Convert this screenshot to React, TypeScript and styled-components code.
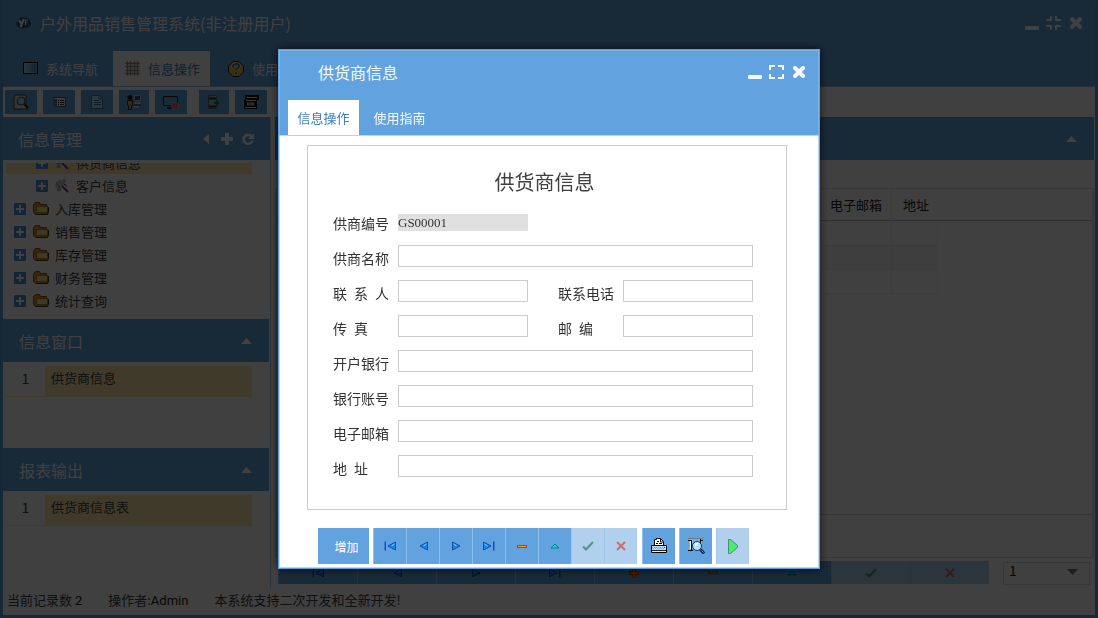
import React from "react";
import styled, { createGlobalStyle, css } from "styled-components";

const blue = "#62a2de";
const sand = "#ffe6ac";
const sans = `"Noto Sans CJK SC", sans-serif`;

const Global = createGlobalStyle`
  *, *::before, *::after { box-sizing: border-box; }
  body { margin: 0; background: #fff; font: 13px/20px ${sans}; color: #404040; }
  button, input, select { font: inherit; color: inherit; margin: 0; padding: 0; border: 0; border-radius: 0; }
  h1, h2, h3, ul, ol { margin: 0; padding: 0; font-weight: 400; list-style: none; }
  svg { display: block; flex: none; }
`;

/* ---------- application frame ---------- */
const Frame = styled.div`
  min-height: 100vh;
  display: flex;
  flex-direction: column;
  border: 3px solid #5a9ad8;
  border-top-color: ${blue};
  background: #fff;
`;
const AppHeader = styled.header`
  background: ${blue};
  color: #fff;
  border-bottom: 1px solid #8fbfe8;
`;
const TitleBar = styled.div`
  display: flex;
  align-items: center;
  gap: 8px;
  height: 48px;
  padding: 0 12px 8px 13px;
`;
const AppTitle = styled.h1`
  flex: 1;
  font-size: 16px;
  line-height: 24px;
`;
const WindowControls = styled.div`
  display: flex;
  gap: 7px;
`;
const IconButton = styled.button`
  display: grid;
  place-items: center;
  width: 15px;
  height: 16px;
  background: none;
  color: inherit;
`;
const AppTabs = styled.nav`
  display: flex;
  height: 35px;
  padding-left: 10px;
`;
const AppTab = styled.button<{ $active?: boolean }>`
  display: flex;
  align-items: center;
  gap: 8px;
  padding: 0 9px 0 ${(p) => (p.$active ? 12 : 10)}px;
  width: ${(p) => (p.$active ? "97px" : "100px")};
  white-space: nowrap;
  background: ${(p) => (p.$active ? "#fff" : "transparent")};
  color: ${(p) => (p.$active ? "#3f7fbb" : "#fff")};
  &:last-child { margin-left: 8px; }
`;
const Toolbar = styled.div`
  display: flex;
  gap: 6px;
  height: 30px;
  padding: 3px 2px;
`;
const ToolButton = styled.button<{ $narrow?: boolean; $group?: boolean }>`
  display: grid;
  place-items: center;
  width: ${(p) => (p.$narrow ? 30 : 32)}px;
  height: 24px;
  margin-left: ${(p) => (p.$group ? 6 : 0)}px;
  background: ${blue};
`;
const Workspace = styled.div`
  flex: 1;
  display: grid;
  grid-template-columns: 268px minmax(0, 1fr);
  gap: 4px;
  padding-right: 1px;
`;
const Sidebar = styled.aside`
  display: flex;
  flex-direction: column;
  border-right: 1px solid #a9cdef;
`;
const BarHeader = styled.header`
  display: flex;
  align-items: center;
  gap: 6px;
  height: 43px;
  padding: 0 15px 0 15px;
  background: ${blue};
  color: #fff;
`;
const BarTitle = styled.h2`
  flex: 1;
  font-size: 16px;
  line-height: 24px;
`;
const Tree = styled.ul`
  display: flex;
  flex-direction: column;
  justify-content: flex-end;
  height: 156px;
  margin-top: 3px;
  padding: 0 18px 7px 3px;
  overflow: hidden;
`;
const TreeRow = styled.li<{ $level: number; $selected?: boolean }>`
  display: flex;
  flex: none;
  align-items: center;
  height: 23px;
  padding-left: ${(p) => 8 + p.$level * 22}px;
  background: ${(p) => (p.$selected ? sand : "transparent")};
  svg + svg { margin: 0 6px 0 7px; }
`;
const Section = styled.section`
  height: 129px;
  padding-right: 1px;
  ${BarHeader} { padding-left: 16px; }
`;
const List = styled.ol`
  padding: 4px 17px 0 3px;
`;
const ListRow = styled.li`
  display: grid;
  grid-template-columns: 39px 1fr;
  height: 31px;
  background: ${sand};
  line-height: 24px;
  > span { padding-left: 6px; }
  > span:first-child { margin-bottom: 1px; padding: 0; text-align: center; background: #fff; font-size: 14px; }
`;

const Main = styled.main`
  display: flex;
  flex-direction: column;
`;
const GridArea = styled.div`
  flex: 1;
  display: flex;
  flex-direction: column;
  margin-top: 28px;
  border: solid #d4dee8;
  border-width: 1px 2px 1px 2px;
`;
const GridHead = styled.div`
  flex: 1;
  border-bottom: 1px solid #d8d8d8;
  background: linear-gradient(#fff 31px, #b8b8b8 31px, #b8b8b8 32px, #fff 32px);
`;
const Summary = styled.div`
  height: 42px;
`;
const Table = styled.table`
  width: 661px;
  table-layout: fixed;
  border-collapse: separate;
  border-spacing: 0;
  th { height: 33px; padding: 0 0 2px 11px; text-align: left; font-weight: 400; color: #222; white-space: nowrap; }
  td { height: 24px; border-bottom: 1px solid #f0f0f0; }
  th + th, td + td { border-right: 1px solid #eee; }
  th:last-child { border-right: 0; }
  tr:nth-child(2) td { background: #f7f7f7; }
`;
const Pager = styled.div`
  display: flex;
  gap: 14px;
  height: 30px;
  padding: 3px 4px 4px 3px;
`;
const Navigator = styled.div`
  flex: 1;
  display: flex;
`;
const PageSelect = styled.div`
  position: relative;
  width: 87px;
  select {
    width: 100%;
    height: 23px;
    padding: 0 5px 6px;
    appearance: none;
    background: #fff;
    border: 1px solid #d5dbe2;
    font-size: 14px;
    line-height: 14px;
    color: #222;
  }
  svg { position: absolute; right: 12px; top: 8px; color: #777; pointer-events: none; }
`;
const StatusBar = styled.footer`
  display: flex;
  gap: 26px;
  padding: 0 4px;
  height: 27px;
  line-height: 24px;
  b { font-weight: 400; font-family: Roboto, sans-serif; color: #181818; }
`;

/* ---------- dialog ---------- */
const Overlay = styled.div`
  position: fixed;
  inset: 0;
  display: grid;
  place-items: center;
  background: rgba(0, 0, 0, 0.75);
`;
const Dialog = styled.section`
  width: 542px;
  max-width: 100%;
  border: 1px solid #5a9fe2;
  background: #fff;
  box-shadow: inset 0 0 0 1px #b9d8f5, 0 0 8px rgba(0, 0, 0, 0.7);
`;
const DialogHeader = styled.header`
  background: ${blue};
  border: 1px solid #7db3e6;
  border-bottom-color: #b4d4f1;
  color: #f4f8fc;
`;
const DialogTitleBar = styled.div`
  display: flex;
  align-items: center;
  height: 49px;
  padding: 0 12px 7px 38px;
`;
const DialogTabs = styled.nav`
  display: flex;
  height: 35px;
  padding-left: 8px;
`;
const DialogTab = styled.button<{ $active?: boolean }>`
  width: ${(p) => (p.$active ? 71 : 81)}px;
  background: ${(p) => (p.$active ? "#fff" : "transparent")};
  color: ${(p) => (p.$active ? "#3f7fbb" : "#f4f8fc")};
`;
const DialogBody = styled.form`
  padding: 9px 32px 4px 28px;
`;
const Panel = styled.div`
  padding: 20px 33px 22px 25px;
  border: 1px solid #ccc;
`;
const FormTitle = styled.h3`
  margin-bottom: 9px;
  padding-left: 3px;
  font-size: 20px;
  line-height: 32px;
  text-align: center;
`;
const FormRow = styled.div`
  display: flex;
  gap: 30px;
  height: 35px;
  padding-top: 3px;
`;
const Field = styled.div<{ $half?: boolean }>`
  display: flex;
  align-items: flex-start;
  min-width: 0;
  flex: ${(p) => (p.$half ? "0 1 195px" : "1 1 0")};
  label { width: 65px; flex: none; font-size: 14px; line-height: 27px; color: #333; }
`;
const TextInput = styled.input`
  flex: 1;
  min-width: 0;
  height: 22px;
  padding: 0 4px;
  border: 1px solid #ccc;
  background: #fff;
  &:read-only {
    height: 17px;
    margin-top: 4px;
    padding: 0;
    border: 0;
    background: #e0e0e0;
    font: 13px/17px "Liberation Serif", serif;
    color: #333;
  }
`;
const Actions = styled.div`
  display: flex;
  gap: 4px;
  padding: 18px 0 0 11px;
`;
const ActionGroup = styled.div`
  display: flex;
  margin-right: 1px;
`;
const navTone = css<{ $off?: boolean }>`
  display: grid;
  place-items: center;
  background: ${(p) => (p.$off ? "#b0d0ee" : blue)};
  border-left: 1px solid ${(p) => (p.$off ? "#a0c6ea" : "#8fbfec")};
`;
const ActionButton = styled.button<{ $off?: boolean }>`
  ${navTone}
  width: 33px;
  height: 36px;
`;
const AddButton = styled.button`
  width: 51px;
  height: 36px;
  padding: 2px 0 0 6px;
  background: ${blue};
  color: #fff;
  font-size: 12px;
`;
const NavButton = styled.button<{ $off?: boolean }>`
  ${navTone}
  flex: 1;
`;

/* ---------- icons ---------- */
const Svg = ({ w = 16, h = 16, children }: { w?: number; h?: number; children: React.ReactNode }) => (
  <svg width={w} height={h} viewBox={`0 0 ${w} ${h}`} fill="currentColor" aria-hidden="true">{children}</svg>
);
const MinusCtl = () => <Svg w={14} h={14}><rect y="10" width="14" height="4" rx="1" /></Svg>;
const ExpandCtl = () => <Svg w={15} h={14}><path d="M0 0h6v2H2v3H0zM9 0h6v5h-2V2H9zM0 9h2v3h4v2H0zM13 9h2v5H9v-2h4z" /></Svg>;
const ShrinkCtl = () => <Svg w={15} h={14}><path d="M4 0h2v5H0V3h4zM9 0h2v3h4v2H9zM0 9h6v5H4v-3H0zM9 9h6v2h-4v3H9z" /></Svg>;
const CloseCtl = () => <Svg w={12} h={12}><path d="M2 2l8 8M10 2l-8 8" stroke="currentColor" strokeWidth="4" strokeLinecap="round" /></Svg>;
const CaretUp = () => <Svg w={11} h={6}><path d="M0 6L5.500 0 11 6z" /></Svg>;
const CaretDown = () => <Svg w={11} h={6}><path d="M0 0h11L5.500 6z" /></Svg>;
const CaretLeft = () => <Svg w={6} h={10}><path d="M6 0v10L0 5z" /></Svg>;
const PlusCtl = () => <Svg w={12} h={12}><path d="M4 0h4v4h4v4H8v4H4V8H0V4h4z" /></Svg>;
const Refresh = () => (
  <Svg w={12} h={12}>
    <path d="M9 3A4.500 4.500 0 1 0 10.400 7.500" fill="none" stroke="currentColor" strokeWidth="2.500" />
    <path d="M12 0v6H6z" />
  </Svg>
);
const Logo = () => (
  <Svg>
    <path d="M3 4C5 1 8 3 9 3c3-1 4 1 5 3 2 2 1 5-1 6-3 2-7 1-9 1-3-1-5-4-3-6z" fill="#1f5f94" />
    <path d="M3 5l2.500 4M8 4L4.500 12" stroke="#fff" strokeWidth="2" fill="none" />
    <path d="M9 5h3M9.500 5v5M9 7.500h2" stroke="#fff" fill="none" />
  </Svg>
);
const ScreenIcon = () => (
  <Svg w={15} h={13}>
    <defs><linearGradient id="scr"><stop stopColor="#a8dcf4" /><stop offset="1" stopColor="#3c80c0" /></linearGradient></defs>
    <rect x=".5" y=".5" width="14" height="11" fill="url(#scr)" stroke="#000" />
    <rect x="1.500" y="1.500" width="12" height="9" fill="none" stroke="#d8d8d8" strokeOpacity=".5" />
  </Svg>
);
const GridIcon = () => (
  <Svg w={15} h={15}>
    <path d="M1 1h13v13H1z" fill="#e0dcd8" />
    <path d="M2.500 0v15M5.500 0v15M9.500 0v15M12.500 0v15M0 2.500h15M0 5.500h15M0 9.500h15M0 12.500h15" stroke="#989490" />
  </Svg>
);
const HelpIcon = () => (
  <Svg>
    <path d="M5 .5h6L15.500 5v6L11 15.500H5L.5 11V5z" fill="#f2b43c" stroke="#201000" />
    <path d="M5 6c0-4 6-4 6-1 0 2-3 2-3 4M8 11v2" stroke="#fff" strokeWidth="3" fill="none" />
    <path d="M5 6c0-4 6-4 6-1 0 2-3 2-3 4M8 11v2" stroke="#3468b0" strokeWidth="2" fill="none" />
  </Svg>
);
const SearchDoc = () => (
  <Svg>
    <path d="M2 1h11v11l2 3H1V4z" fill="#d8d4c8" stroke="#444" />
    <circle cx="8" cy="7" r="4" fill="#9ce0f4" stroke="#34505c" />
    <path d="M11 10l4 4" stroke="#222" strokeWidth="2" />
  </Svg>
);
const FormIcon = () => (
  <Svg>
    <path d="M2.500 3.500h12v9h-12z" fill="#e8e8e8" stroke="#555" />
    <path d="M2 5h4v8H2z" fill="#4a80b0" />
    <path d="M7 6.500h1M9 6.500h4M7 8.500h1M9 8.500h4M7 10.500h1M9 10.500h4" stroke="#333" />
  </Svg>
);
const PageIcon = () => (
  <Svg>
    <path d="M2.500 1.500h8l3 3v10h-11z" fill="#b8e0f0" stroke="#507890" />
    <path d="M10 1v4h4M5 6.500h5M5 8.500h7M5 10.500h7" stroke="#407090" fill="none" />
  </Svg>
);
const PersonIcon = () => (
  <Svg>
    <circle cx="4" cy="3.500" r="2.500" fill="#222" />
    <path d="M1.500 6.500h5v5h-1v4h-3v-4h-1z" fill="#d8a860" stroke="#302010" />
    <path d="M8.500 1.500h6v5h-6z" fill="#2840b8" stroke="#c8c8c8" />
    <path d="M8 9.500h7M8 12.500h5" stroke="#ddd" strokeWidth="2" />
    <path d="M8 11h7" stroke="#222" />
  </Svg>
);
const MonitorIcon = () => (
  <Svg>
    <path d="M.5 2.500h14v9H.5z" fill="#68acd8" stroke="#222" />
    <path d="M4 14h5" stroke="#333" strokeWidth="2" />
    <circle cx="12" cy="12" r="3.500" fill="#c85898" stroke="#d8c040" />
    <circle cx="12" cy="12" r="1" fill="#60c8e8" />
  </Svg>
);
const ImportIcon = () => (
  <Svg>
    <path d="M2.500 1.500h8v13h-8z" fill="#88b8d4" stroke="#6a6a6a" />
    <path d="M3 4.500h7M3 12.500h7" stroke="#333" strokeWidth="2" />
    <path d="M8 9h5M11 6v6" stroke="#187828" strokeWidth="2" />
  </Svg>
);
const ExportIcon = () => (
  <Svg>
    <path d="M2 1h14v5h-2v9H1V6h1z" fill="#111" />
    <path d="M4 3.500h10M3 6.500h10M2 13.500h11" stroke="#ddd" />
    <path d="M4 10h7" stroke="#ddd" strokeWidth="3" />
    <path d="M5 10h5" stroke="#555" />
  </Svg>
);
const Expander = () => (
  <Svg w={12} h={12}><rect width="12" height="12" rx="1" fill="#4a90d2" /><path d="M6 2v8M2 6h8" stroke="#fff" strokeWidth="2" /></Svg>
);
const Folder = () => (
  <Svg w={16} h={16}>
    <path d="M.5 11.500v-8l2-2h4l1 2h6v2h1v7l-1 1h-11z" fill="#d69a28" stroke="#8a5410" />
    <path d="M3.500 5.500h11v6h-11z" fill="#f3e28a" stroke="#b07a20" />
    <path d="M3 13.500h11.500l1-2V6" fill="none" stroke="#402804" />
  </Svg>
);
const Wand = () => (
  <Svg w={15} h={16}>
    <path d="M1 5l4-3 1 2 3-3 2 2-4 4-5 5 2-4-3 1zM2 12l4-2-1 3z" fill="#c4c4c4" stroke="#777" strokeWidth=".5" />
    <path d="M7 8l6 6" stroke="#7a30b0" strokeWidth="2" />
    <path d="M9 6l3 2" stroke="#333" />
  </Svg>
);

const Right = ({ x = 0 }: { x?: number }) => (
  <g transform={`translate(${x} 0)`}>
    <path d="M.5 1l7.500 4-7.500 4z" fill="#1d84ee" stroke="#0b4fa8" />
    <path d="M1.500 3l3 2" stroke="#8cc8ff" />
  </g>
);
const NextIcon = () => <Svg w={9} h={10}><Right /></Svg>;
const PrevIcon = () => <Svg w={9} h={10}><g transform="translate(9 0) scale(-1 1)"><Right /></g></Svg>;
const LastIcon = () => <Svg w={12} h={10}><Right /><path d="M10 .5h1.500v9H10z" fill="#0b56b8" /></Svg>;
const FirstIcon = () => (
  <Svg w={12} h={10}><g transform="translate(12 0) scale(-1 1)"><Right /><path d="M10 .5h1.500v9H10z" fill="#0b56b8" /></g></Svg>
);
const AddIcon = () => (
  <Svg w={10} h={10}><path d="M3.500.5h3v3h3v3h-3v3h-3v-3h-3v-3h3z" fill="#f07818" stroke="#c82c08" /></Svg>
);
const RemoveIcon = () => <Svg w={10} h={3}><path d="M0 0h10v3H0z" fill="#c83808" /><path d="M1 1h8v1H1z" fill="#ff9a00" /></Svg>;
const EditIcon = () => <Svg w={10} h={6}><path d="M1 5l4-4 4 4z" fill="#20d0d0" stroke="#087c90" /></Svg>;
const CheckIcon = () => <Svg w={12} h={10}><path d="M1 5.500l3 3L11 1" fill="none" stroke="#4a9c78" strokeWidth="2" /></Svg>;
const CrossIcon = () => <Svg w={10} h={10}><path d="M1 1l8 8M9 1L1 9" stroke="#d06a70" strokeWidth="2" /></Svg>;
const PrintIcon = () => (
  <Svg w={16} h={16}>
    <path d="M3.500 7V1.500h2V.5h4l3 3V7" fill="#fff" stroke="#000" />
    <path d="M9.500 1v3H12M6 3.500h2M5 5.500h2M8 5.500h3" stroke="#000" fill="none" />
    <path d="M.5 7.500h15v7H.5z" fill="#b8d8fc" stroke="#000" />
    <path d="M1 13.500h14" stroke="#f4ecc8" />
    <path d="M1 12.500h14" stroke="#222" />
    <path d="M1 9.500h12" stroke="#6aa2e0" strokeDasharray="1 1" />
    <path d="M2 10.500h11" stroke="#6aa2e0" strokeDasharray="1 1" />
    <path d="M13 9.500h1" stroke="#e02020" />
  </Svg>
);
const PreviewIcon = () => (
  <Svg w={17} h={16}>
    <path d="M1 1h13v11H1z" fill="#6cb4ec" />
    <path d="M0 .5h15M3 11.500h4" stroke="#777" />
    <path d="M0 2.500h4M12 2.500h3M0 12.500h5M12.500 1v4M3.500 3v9" stroke="#111" />
    <path d="M2 3h1v8H2z" fill="#fff" />
    <circle cx="9" cy="8" r="4.500" fill="#aee4ff" stroke="#14344c" />
    <path d="M7 7l3-2" stroke="#fff" strokeWidth="2" />
    <path d="M12.500 11.500l3.500 4" stroke="#0a2c60" strokeWidth="3" />
    <path d="M13.500 12.500l2 2" stroke="#2fa8f0" strokeWidth="1" />
  </Svg>
);
const RunIcon = () => <Svg w={11} h={15}><path d="M.5 .5v14h2l7-6v-2l-7-6z" fill="#50e878" stroke="#4a9070" /></Svg>;

/* ---------- data ---------- */
const toolbarItems = [
  { name: "查询", Icon: SearchDoc },
  { name: "表单", Icon: FormIcon },
  { name: "文档", Icon: PageIcon },
  { name: "用户", Icon: PersonIcon, narrow: true },
  { name: "界面", Icon: MonitorIcon },
  { name: "导入", Icon: ImportIcon, narrow: true, group: true },
  { name: "导出", Icon: ExportIcon },
];
const tree = [
  { label: "供货商信息", level: 1, selected: true },
  { label: "客户信息", level: 1 },
  { label: "入库管理", level: 0 },
  { label: "销售管理", level: 0 },
  { label: "库存管理", level: 0 },
  { label: "财务管理", level: 0 },
  { label: "统计查询", level: 0 },
];
const moves = [
  { name: "首条", Icon: FirstIcon },
  { name: "上一条", Icon: PrevIcon },
  { name: "下一条", Icon: NextIcon },
  { name: "末条", Icon: LastIcon },
];
const edits = [
  { name: "删除", Icon: RemoveIcon },
  { name: "编辑", Icon: EditIcon },
  { name: "保存", Icon: CheckIcon, off: true },
  { name: "取消", Icon: CrossIcon, off: true },
];
const dialogNav: { name: string; Icon: React.FC; off?: boolean }[] = [...moves, ...edits];
const gridNav: { name: string; Icon: React.FC; off?: boolean }[] = [...moves, { name: "新增", Icon: AddIcon }, ...edits];

type FieldSpec = { id: string; label: string; value?: string; half?: boolean };
const rows: FieldSpec[][] = [
  [{ id: "code", label: "供商编号", value: "GS00001", half: true }],
  [{ id: "name", label: "供商名称" }],
  [{ id: "contact", label: "联\u2002系\u2002人" }, { id: "phone", label: "联系电话" }],
  [{ id: "fax", label: "传\u2002真" }, { id: "zip", label: "邮\u2002编" }],
  [{ id: "bank", label: "开户银行" }],
  [{ id: "account", label: "银行账号" }],
  [{ id: "email", label: "电子邮箱" }],
  [{ id: "address", label: "地\u2002址" }],
];

const SideSection = ({ title, item }: { title: string; item: string }) => (
  <Section>
    <BarHeader>
      <BarTitle>{title}</BarTitle>
      <IconButton type="button" aria-label="折叠"><CaretUp /></IconButton>
    </BarHeader>
    <List>
      <ListRow><span>1</span><span>{item}</span></ListRow>
    </List>
  </Section>
);

export default function App() {
  return (
    <>
      <Global />
      <Frame>
        <AppHeader>
          <TitleBar>
            <Logo />
            <AppTitle>户外用品销售管理系统(非注册用户)</AppTitle>
            <WindowControls>
              <IconButton aria-label="最小化"><MinusCtl /></IconButton>
              <IconButton aria-label="还原"><ShrinkCtl /></IconButton>
              <IconButton aria-label="关闭"><CloseCtl /></IconButton>
            </WindowControls>
          </TitleBar>
          <AppTabs>
            <AppTab><ScreenIcon />系统导航</AppTab>
            <AppTab $active><GridIcon />信息操作</AppTab>
            <AppTab><HelpIcon />使用</AppTab>
          </AppTabs>
        </AppHeader>
        <Toolbar>
          {toolbarItems.map(({ name, Icon, narrow, group }) => (
            <ToolButton key={name} aria-label={name} $narrow={narrow} $group={group}><Icon /></ToolButton>
          ))}
        </Toolbar>
        <Workspace>
          <Sidebar>
            <BarHeader>
              <BarTitle>信息管理</BarTitle>
              <IconButton aria-label="收起"><CaretLeft /></IconButton>
              <IconButton aria-label="展开"><PlusCtl /></IconButton>
              <IconButton aria-label="刷新"><Refresh /></IconButton>
            </BarHeader>
            <Tree>
              {tree.map((n) => (
                <TreeRow key={n.label} $level={n.level} $selected={n.selected}>
                  <Expander />
                  {n.level ? <Wand /> : <Folder />}
                  {n.label}
                </TreeRow>
              ))}
            </Tree>
            <SideSection title="信息窗口" item="供货商信息" />
            <SideSection title="报表输出" item="供货商信息表" />
          </Sidebar>
          <Main>
            <BarHeader>
              <BarTitle />
              <IconButton aria-label="折叠"><CaretUp /></IconButton>
            </BarHeader>
            <GridArea>
              <GridHead>
                <Table>
                  <colgroup><col /><col width="73" /><col width="46" /></colgroup>
                  <thead><tr><th /><th>电子邮箱</th><th>地址</th></tr></thead>
                  <tbody>
                    {[0, 1, 2].map((i) => <tr key={i}><td /><td /><td /></tr>)}
                  </tbody>
                </Table>
              </GridHead>
              <Summary />
            </GridArea>
            <Pager>
              <Navigator>
                {gridNav.map(({ name, Icon, off }) => (
                  <NavButton key={name} aria-label={name} $off={off}><Icon /></NavButton>
                ))}
              </Navigator>
              <PageSelect>
                <select aria-label="页码" defaultValue="1"><option>1</option></select>
                <CaretDown />
              </PageSelect>
            </Pager>
          </Main>
        </Workspace>
        <StatusBar>
          <span>当前记录数 <b>2</b></span>
          <span>操作者:<b>Admin</b></span>
          <span>本系统支持二次开发和全新开发!</span>
        </StatusBar>
      </Frame>
      <Overlay>
        <Dialog role="dialog" aria-labelledby="dialog-title">
          <DialogHeader>
            <DialogTitleBar>
              <BarTitle id="dialog-title">供货商信息</BarTitle>
              <WindowControls>
                <IconButton aria-label="最小化"><MinusCtl /></IconButton>
                <IconButton aria-label="最大化"><ExpandCtl /></IconButton>
                <IconButton aria-label="关闭"><CloseCtl /></IconButton>
              </WindowControls>
            </DialogTitleBar>
            <DialogTabs>
              <DialogTab $active>信息操作</DialogTab>
              <DialogTab>使用指南</DialogTab>
            </DialogTabs>
          </DialogHeader>
          <DialogBody onSubmit={(e) => e.preventDefault()}>
            <Panel>
              <FormTitle>供货商信息</FormTitle>
              {rows.map((row) => (
                <FormRow key={row[0].id}>
                  {row.map((f) => (
                    <Field key={f.id} $half={f.half}>
                      <label htmlFor={f.id}>{f.label}</label>
                      <TextInput id={f.id} defaultValue={f.value} readOnly={!!f.value} />
                    </Field>
                  ))}
                </FormRow>
              ))}
            </Panel>
            <Actions>
              <AddButton type="button">增加</AddButton>
              <ActionGroup>
                {dialogNav.map(({ name, Icon, off }) => (
                  <ActionButton type="button" key={name} aria-label={name} $off={off}><Icon /></ActionButton>
                ))}
              </ActionGroup>
              <ActionButton type="button" aria-label="打印"><PrintIcon /></ActionButton>
              <ActionButton type="button" aria-label="预览"><PreviewIcon /></ActionButton>
              <ActionButton type="button" aria-label="执行" $off><RunIcon /></ActionButton>
            </Actions>
          </DialogBody>
        </Dialog>
      </Overlay>
    </>
  );
}
